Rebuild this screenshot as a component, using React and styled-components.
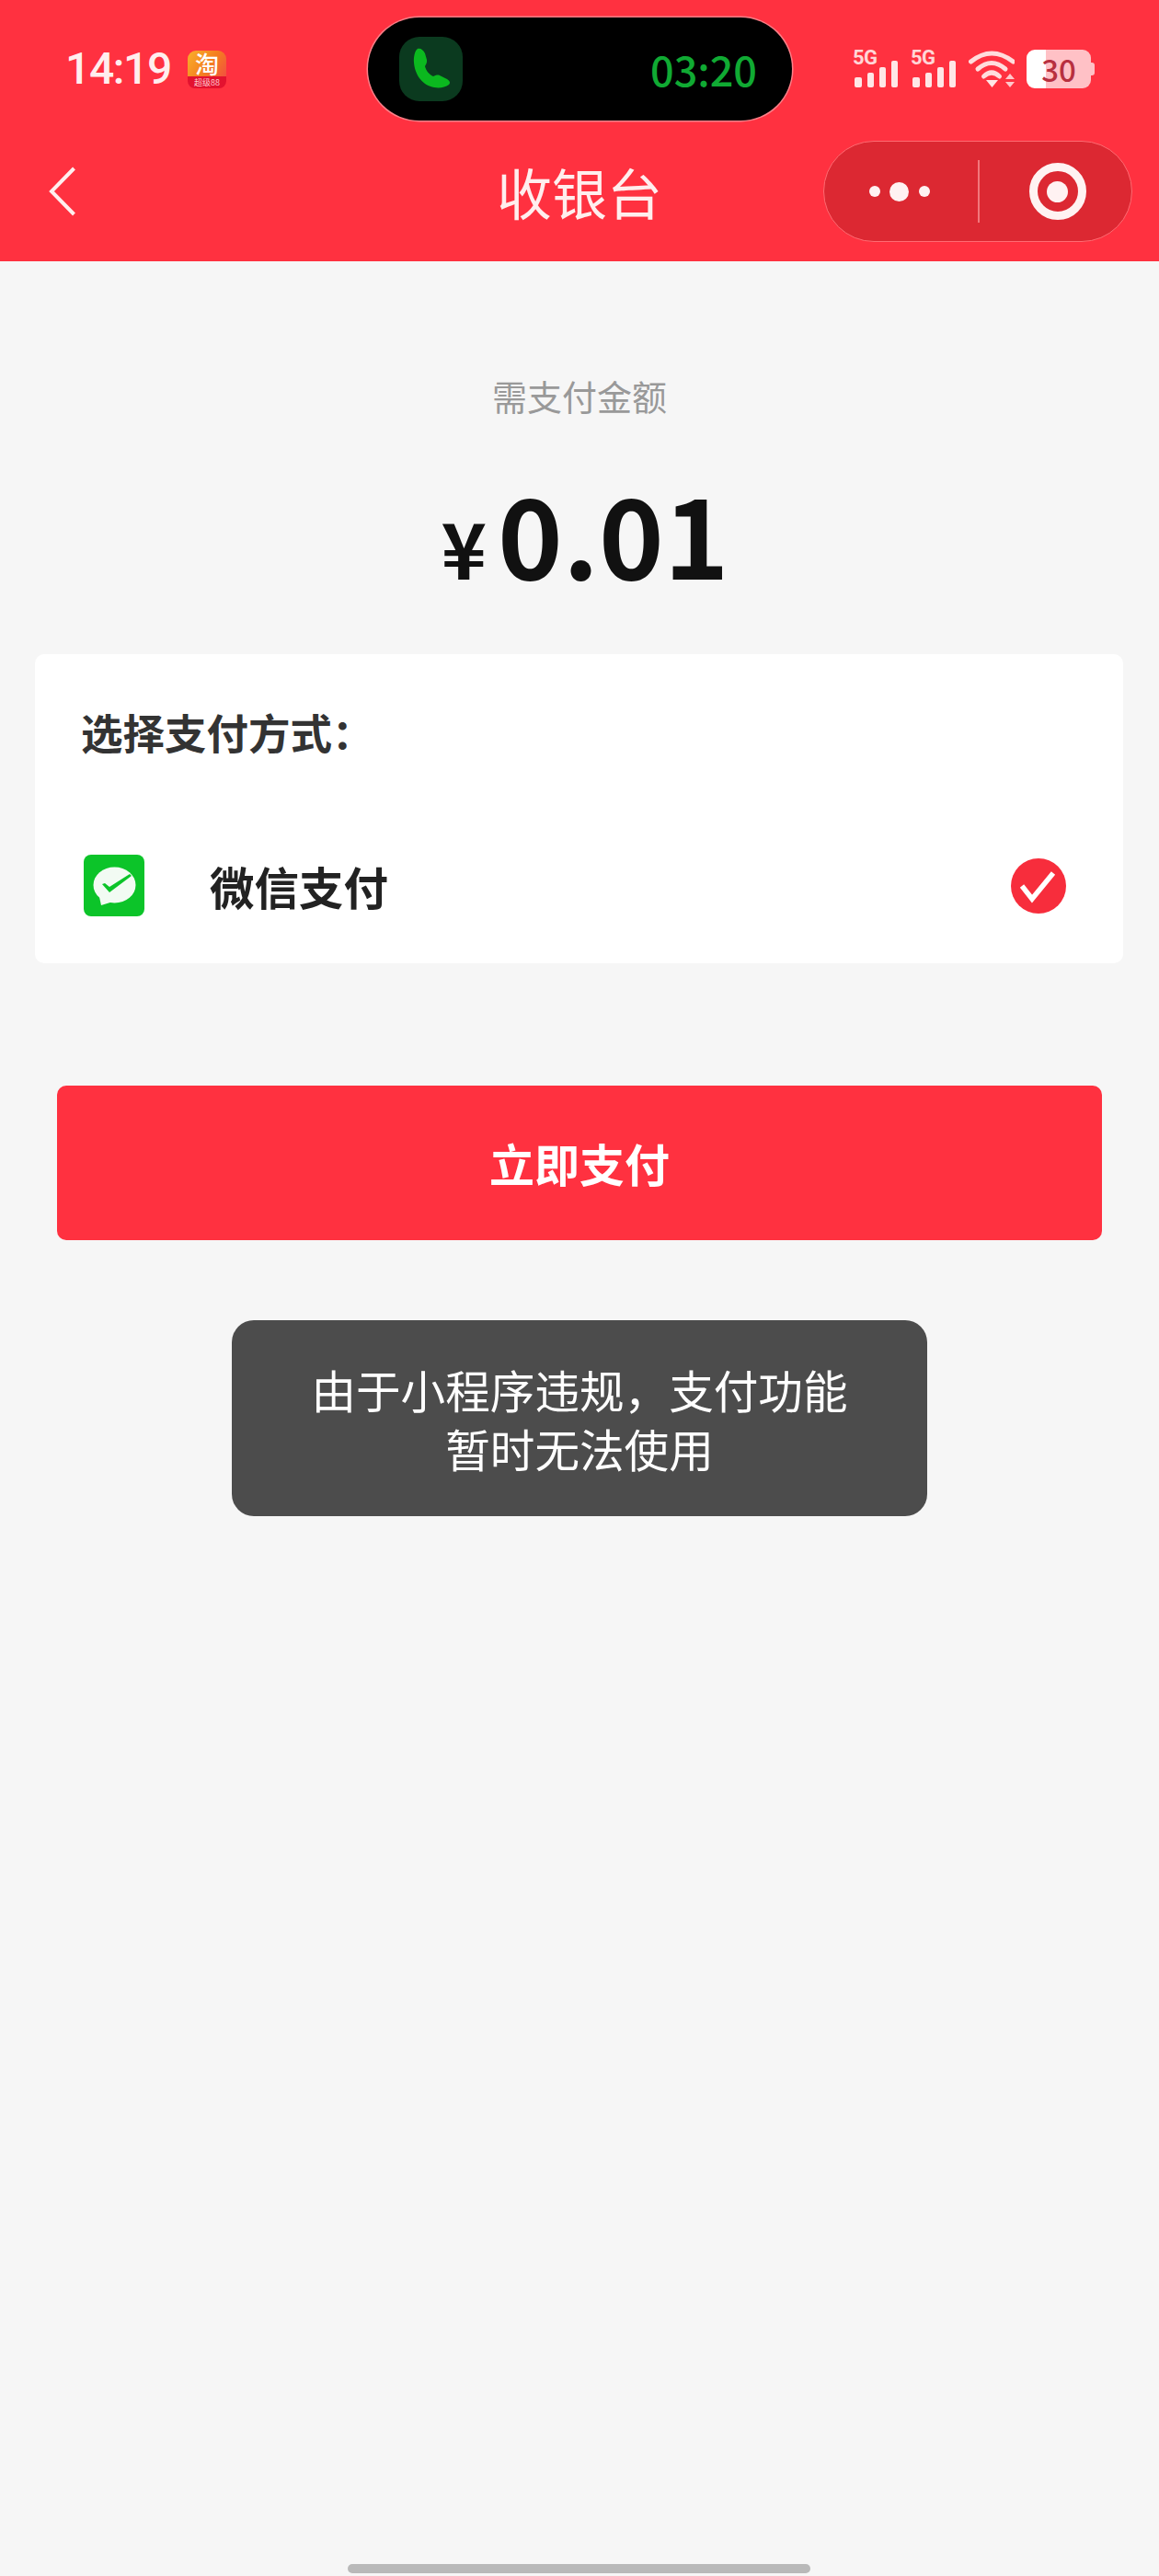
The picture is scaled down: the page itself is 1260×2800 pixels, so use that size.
import React from "react";
import styled, { createGlobalStyle } from "styled-components";

const cjk = '"Noto Sans CJK SC", "Noto Sans", sans-serif';

const Global = createGlobalStyle`
  html, body { margin: 0; padding: 0; background: #f6f6f6; }
  * { box-sizing: border-box; }
`;

const Page = styled.div`
  position: relative;
  width: 1260px;
  height: 2800px;
  overflow: hidden;
  display: flex;
  flex-direction: column;
  background: #f6f6f6;
  font-family: ${cjk};
`;

const Header = styled.header`
  height: 284px;
  background: #ff3140;
  flex: none;
`;

const StatusBar = styled.div`
  height: 150px;
  display: flex;
  align-items: center;
  padding-left: 71px;
`;

const LeftGroup = styled.div`
  width: 329px;
  display: flex;
  align-items: center;
  gap: 20px;
`;

const Time = styled.span`
  width: 113px;
  font-family: Roboto, sans-serif;
  font-size: 48px;
  font-weight: 500;
  line-height: 50px;
  letter-spacing: -1.4px;
  color: #ffeeee;
  white-space: nowrap;
`;

const AppBadge = styled.div`
  width: 42px;
  height: 41px;
  display: flex;
  flex-direction: column;
`;

const BadgeGlyph = styled.span`
  height: 28px;
  border-radius: 9px 9px 0 0;
  display: flex;
  align-items: center;
  justify-content: center;
  background: linear-gradient(125deg, #f9b02b 0%, #f47f20 55%, #f2503f 100%);
  font-size: 26px;
  line-height: 28px;
  font-weight: 500;
  color: #fff;
`;

const BadgeLabel = styled.span`
  height: 13px;
  border-radius: 0 0 8px 8px;
  background: #e3122f;
  text-align: center;
  font-size: 9px;
  line-height: 13px;
  color: #ffc9d0;
  white-space: nowrap;
`;

const Island = styled.div`
  width: 461px;
  height: 112px;
  padding: 0 38px 0 34px;
  border-radius: 56px;
  background: #000;
  box-shadow: 0 0 0 1.5px #ff7f88;
  display: flex;
  align-items: center;
  justify-content: space-between;
`;

const CallTile = styled.div`
  width: 69px;
  height: 70px;
  border-radius: 22px;
  background: #0b3a1f;
  display: flex;
  align-items: center;
  justify-content: center;
`;

const CallTime = styled.span`
  font-size: 45px;
  font-weight: 500;
  line-height: 50px;
  color: #10aa33;
`;

const StatusIcons = styled.div`
  margin-left: 66px;
  display: flex;
  align-items: center;
  gap: 13px;
`;

const SignalBox = styled.div`
  width: 50px;
  height: 42px;
  display: grid;
`;

const SignalType = styled.span`
  grid-area: 1 / 1;
  align-self: start;
  justify-self: start;
  font-family: Roboto, sans-serif;
  font-size: 22px;
  font-weight: 700;
  line-height: 17px;
  letter-spacing: -0.5px;
  color: #ffd6d7;
`;

const StatusGlyph = styled.svg`
  grid-area: 1 / 1;
  display: block;
  flex: none;
`;

const Battery = styled.div`
  position: relative;
  width: 70px;
  height: 42px;
  border-radius: 9px;
  background: linear-gradient(90deg, #ffffff 30%, #ffc1c6 30%);
  text-align: center;
  font-size: 33px;
  font-weight: 500;
  line-height: 42px;
  color: #b8303f;
  &::after {
    content: "";
    position: absolute;
    right: -4px;
    top: 14px;
    width: 4px;
    height: 14px;
    border-radius: 0 3px 3px 0;
    background: #ffc1c6;
  }
`;

const NavBar = styled.nav`
  height: 116px;
  display: grid;
  grid-template-columns: minmax(0, 1fr) auto minmax(0, 1fr);
  align-items: center;
  padding: 0 29px;
`;

const BackSlot = styled.div`
  padding-left: 24px;
  display: flex;
`;

const NavTitle = styled.h1`
  margin: 0;
  font-size: 60px;
  font-weight: 400;
  line-height: 70px;
  color: #ffeeee;
`;

const Capsule = styled.div`
  justify-self: end;
  width: 336px;
  height: 110px;
  border-radius: 55px;
  background: #dc2832;
  border: 1.5px solid #ff6b72;
  display: grid;
  grid-template-columns: 167px 1.5px 1fr;
  align-items: center;
`;

const Dots = styled.div`
  display: flex;
  align-items: center;
  justify-content: center;
  gap: 10.5px;
  padding-right: 4px;
`;

const Dot = styled.span`
  width: ${(p) => p.$size}px;
  height: ${(p) => p.$size}px;
  border-radius: 50%;
  background: #fff2f2;
`;

const CapsuleDivider = styled.span`
  height: 68px;
  background: #f2777c;
`;

const Target = styled.span`
  justify-self: center;
  width: 62px;
  height: 62px;
  margin-left: 5px;
  border-radius: 50%;
  border: 9px solid #fff2f2;
  display: flex;
  align-items: center;
  justify-content: center;
  &::before {
    content: "";
    width: 23px;
    height: 23px;
    border-radius: 50%;
    background: #fff2f2;
  }
`;

const AmountLabel = styled.div`
  margin-top: 121px;
  text-align: center;
  font-size: 38px;
  line-height: 50px;
  color: #999;
`;

const Amount = styled.div`
  height: 256px;
  display: flex;
  justify-content: center;
  align-items: baseline;
  padding: 48px 0 0 12px;
  color: #111;
  font-weight: 700;
`;

const Currency = styled.span`
  font-size: 84px;
  line-height: 150px;
  margin-right: 12px;
`;

const AmountValue = styled.span`
  font-size: 120px;
  line-height: 150px;
`;

const Card = styled.section`
  width: 1183px;
  margin-left: 38px;
  height: 336px;
  background: #fff;
  border-radius: 10px;
`;

const CardTitle = styled.div`
  height: 167px;
  padding-left: 50px;
  display: flex;
  align-items: center;
  font-size: 45.5px;
  font-weight: 700;
  color: #333;
`;

const PayRow = styled.div`
  height: 169px;
  padding: 0 62px 0 53px;
  display: flex;
  align-items: center;
`;

const PayName = styled.span`
  flex: 1;
  margin-left: 71px;
  font-size: 48.5px;
  font-weight: 700;
  color: #222;
`;

const PayButton = styled.button`
  display: block;
  width: 1136px;
  height: 168px;
  margin: 133px 0 0 62px;
  padding: 0 0 2px;
  border: 0;
  border-radius: 10px;
  background: #ff3140;
  color: #fff;
  font-family: ${cjk};
  font-size: 49px;
  font-weight: 700;
`;

const Toast = styled.div`
  position: absolute;
  left: 252px;
  top: 1435px;
  width: 756px;
  height: 213px;
  border-radius: 24px;
  background: #4c4c4c;
  color: #fff;
  display: flex;
  align-items: center;
  justify-content: center;
  text-align: center;
  font-size: 48.6px;
  line-height: 64px;
`;

const HomeBar = styled.div`
  width: 503px;
  height: 10px;
  margin: auto 0 3px 378px;
  border-radius: 5px;
  background: #b9b9b9;
`;

const Signal = () => (
  <SignalBox>
    <SignalType>5G</SignalType>
    <StatusGlyph width="50" height="42" viewBox="0 0 50 42">
      <g fill="#ffe6e6">
        <rect x="2" y="30" width="8" height="11" rx="2" />
        <rect x="16" y="25" width="7" height="16" rx="2" />
        <rect x="29" y="19" width="7" height="22" rx="2" />
        <rect x="42" y="12" width="7" height="29" rx="2" />
      </g>
    </StatusGlyph>
  </SignalBox>
);

const Wifi = () => (
  <StatusGlyph width="50" height="42" viewBox="0 0 50 42">
    <g fill="none" stroke="#ffdcdc" strokeWidth="5" strokeLinecap="round">
      <path d="M2.5 13 Q25 -5 48.5 13" />
      <path d="M10 21 Q25 8 40 21" />
      <path d="M16.5 29 Q25 21 33.500 29" />
    </g>
    <path d="M19 33 H32 L25.500 41 Z" fill="#ffe6e6" />
    <path d="M40 32 L45 26 L50 32 Z M40 35 H50 L45 41 Z" fill="#ffc8cb" />
  </StatusGlyph>
);

const PhoneGlyph = () => (
  <svg width="69" height="70" viewBox="0 0 69 70">
    <path
      d="M20 13 C23 12 26 14 28 18 L30 25 C30.500 28 29 30 28 32 C29 37 33 41 37 43 C39 42 42 41 44 42 L52 46 C55 48 56 50 54 52 C50 55 44 56 38 55 C26 53 17 42 16 28 C15.500 22 17 15 20 13 Z"
      fill="#0bb81f"
    />
  </svg>
);

const BackChevron = () => (
  <svg width="30" height="54" viewBox="0 0 30 54">
    <path d="M27.500 2 L3 27 L27.500 52" fill="none" stroke="#ffeeee" strokeWidth="4" />
  </svg>
);

const WeChatPay = () => (
  <svg width="66" height="67" viewBox="0 0 66 67">
    <rect width="66" height="67" rx="8" fill="#0cc429" />
    <ellipse cx="33.500" cy="33" rx="23" ry="19.500" fill="#f2fbf3" />
    <path d="M17 46 L19 55 L32 51 Z" fill="#f2fbf3" />
    <path d="M20 32 L23 31 L28 35 L50 21 L52 23 L28 41 Z" fill="#0cc429" />
  </svg>
);

const CheckBadge = () => (
  <svg width="60" height="60" viewBox="0 0 60 60">
    <circle cx="30" cy="30" r="30" fill="#f72d3c" />
    <path d="M12 30 L23 44 L46 16" fill="none" stroke="#fff" strokeWidth="5.500" />
  </svg>
);

export default function App() {
  return (
    <Page>
      <Global />
      <Header>
        <StatusBar>
          <LeftGroup>
            <Time>14:19</Time>
            <AppBadge>
              <BadgeGlyph>淘</BadgeGlyph>
              <BadgeLabel>超级88</BadgeLabel>
            </AppBadge>
          </LeftGroup>
          <Island>
            <CallTile>
              <PhoneGlyph />
            </CallTile>
            <CallTime>03:20</CallTime>
          </Island>
          <StatusIcons>
            <Signal />
            <Signal />
            <Wifi />
            <Battery>30</Battery>
          </StatusIcons>
        </StatusBar>
        <NavBar>
          <BackSlot>
            <BackChevron />
          </BackSlot>
          <NavTitle>收银台</NavTitle>
          <Capsule>
            <Dots>
              <Dot $size={12} />
              <Dot $size={21} />
              <Dot $size={12} />
            </Dots>
            <CapsuleDivider />
            <Target />
          </Capsule>
        </NavBar>
      </Header>
      <AmountLabel>需支付金额</AmountLabel>
      <Amount>
        <Currency>¥</Currency>
        <AmountValue>0.01</AmountValue>
      </Amount>
      <Card>
        <CardTitle>选择支付方式：</CardTitle>
        <PayRow>
          <WeChatPay />
          <PayName>微信支付</PayName>
          <CheckBadge />
        </PayRow>
      </Card>
      <PayButton>立即支付</PayButton>
      <Toast>
        由于小程序违规，支付功能
        <br />
        暂时无法使用
      </Toast>
      <HomeBar />
    </Page>
  );
}
